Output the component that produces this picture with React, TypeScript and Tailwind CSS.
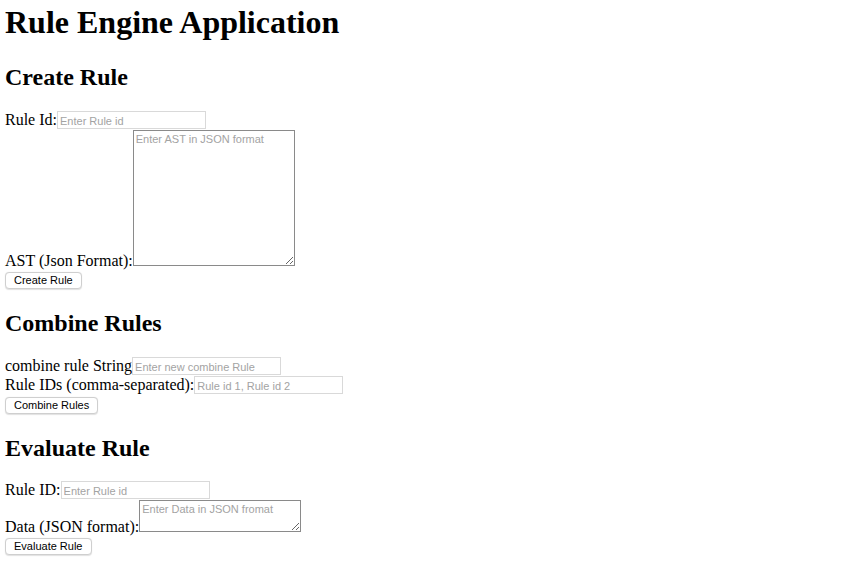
import React from 'react';

const inputCls =
  "w-[149px] h-[18px] border border-[#d9d9d9] bg-white px-[2px] pt-[2px] pb-0 text-[11px] leading-[13px] text-black outline-none placeholder:text-[#a3a3a3] font-['Liberation_Sans',Arial,sans-serif]";

const textareaCls =
  "block border border-[#8a8a8a] bg-white px-[2px] py-[1px] text-[11px] leading-[14px] text-black outline-none placeholder:text-[#a3a3a3] font-['Liberation_Sans',Arial,sans-serif]";

const buttonCls =
  "block h-[17px] rounded-[4px] border border-[#cfcfcf] bg-white px-[8px] text-[11px] leading-[15px] text-black shadow-[0_0.5px_1px_rgba(0,0,0,0.12)] font-['Liberation_Sans',Arial,sans-serif]";

function Section({ title, first, children }: { title: string; first?: boolean; children: React.ReactNode }) {
  return (
    <section>
      <h2 className={`${first ? 'mt-[22px]' : 'mt-[20px]'} text-[24px] leading-[28px] font-bold`}>{title}</h2>
      {children}
    </section>
  );
}

export default function App() {
  return (
    <div className="min-h-[582px] bg-white pl-[5px] text-black font-['Liberation_Serif','Times_New_Roman',serif]">
      <h1 className="pt-[4px] text-[32px] leading-[37px] font-bold">Rule Engine Application</h1>

      <Section title="Create Rule" first>
        <div className="mt-[20px] flex items-baseline text-[16px] leading-[18px]">
          <label>Rule Id:</label>
          <input className={inputCls} placeholder="Enter Rule id" />
        </div>
        <div className="mt-[1px] flex items-end text-[16px] leading-[16px]">
          <label className="-mb-[3px]">AST (Json Format):</label>
          <textarea className={`${textareaCls} w-[162px] h-[136px]`} placeholder="Enter AST in JSON format" />
        </div>
        <button className={`${buttonCls} mt-[6px]`}>Create Rule</button>
      </Section>

      <Section title="Combine Rules">
        <div className="mt-[20px] flex items-baseline text-[16px] leading-[18px]">
          <label>combine rule String</label>
          <input className={inputCls} placeholder="Enter new combine Rule" />
        </div>
        <div className="mt-[1px] flex items-baseline text-[16px] leading-[18px]">
          <label>Rule IDs (comma-separated):</label>
          <input className={inputCls} placeholder="Rule id 1, Rule id 2" />
        </div>
        <button className={`${buttonCls} mt-[3px]`}>Combine Rules</button>
      </Section>

      <Section title="Evaluate Rule">
        <div className="mt-[19px] flex items-baseline text-[16px] leading-[18px]">
          <label>Rule ID:</label>
          <input className={inputCls} placeholder="Enter Rule id" />
        </div>
        <div className="mt-[1px] flex items-end text-[16px] leading-[16px]">
          <label className="-mb-[3px]">Data (JSON format):</label>
          <textarea className={`${textareaCls} w-[162px] h-[32px]`} placeholder="Enter Data in JSON fromat" />
        </div>
        <button className={`${buttonCls} mt-[6px]`}>Evaluate Rule</button>
      </Section>
    </div>
  );
}
